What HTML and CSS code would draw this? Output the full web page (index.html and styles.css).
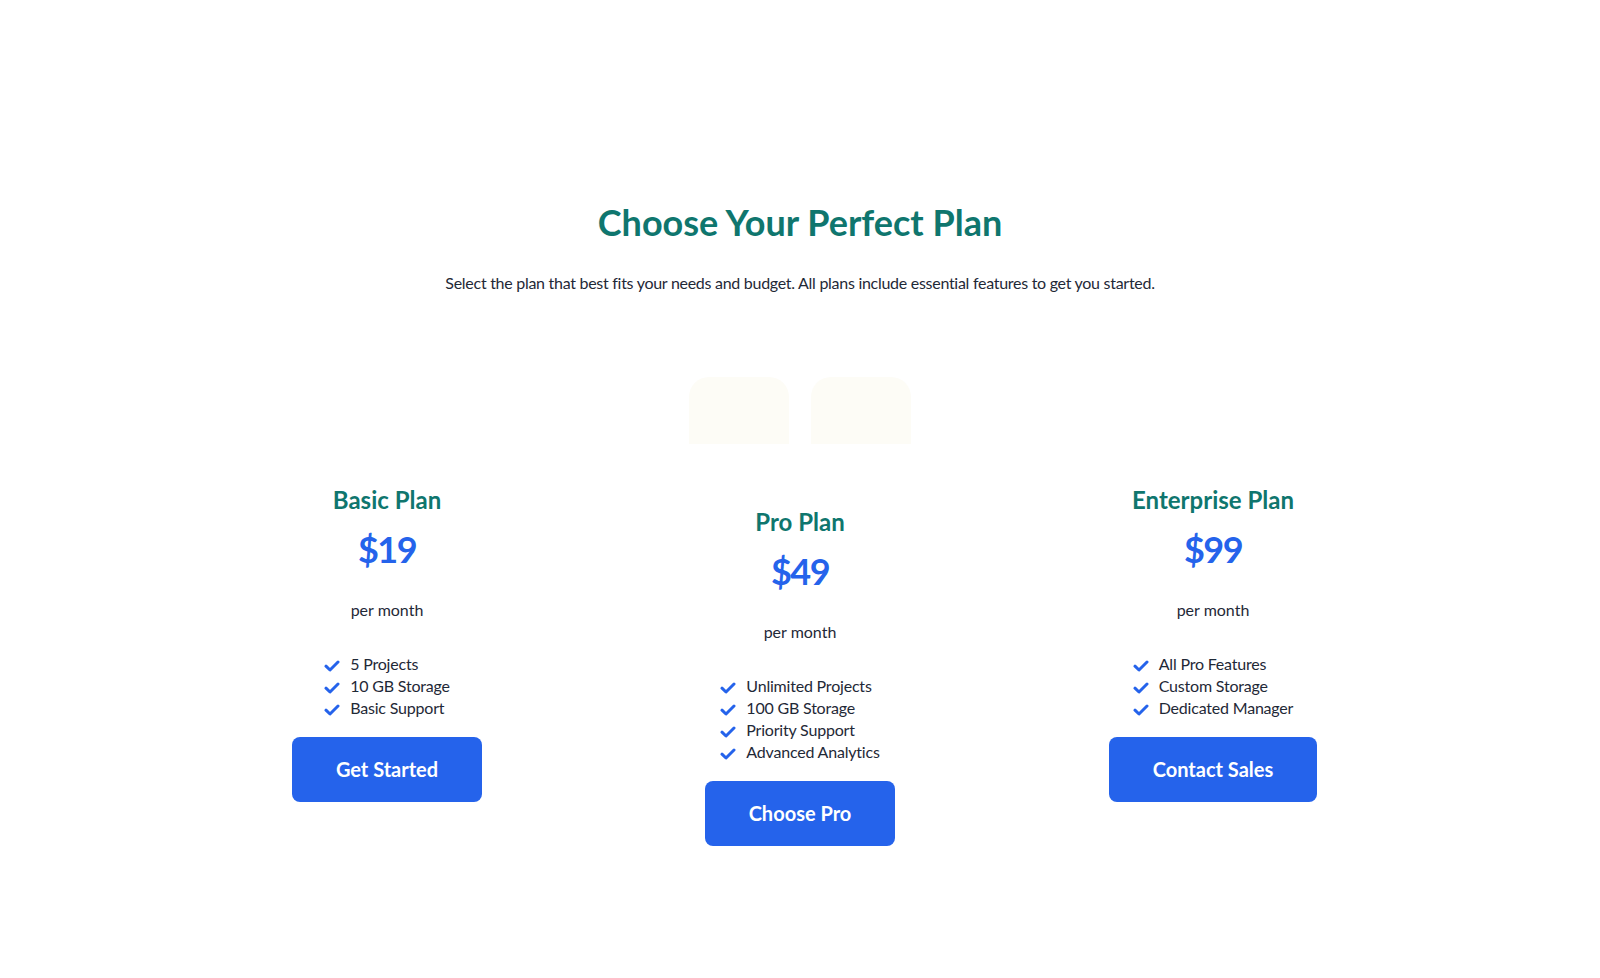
FILE: index.html
```html
<!DOCTYPE html>
<html lang="en">
<head>
<meta charset="utf-8">
<title>Choose Your Perfect Plan</title>
<link rel="stylesheet" href="styles.css">
</head>
<body>
<section class="pricing">
  <h1 class="title">Choose Your Perfect Plan</h1>
  <p class="subtitle">Select the plan that best fits your needs and budget. All plans include essential features to get you started.</p>
  <div class="decor"><span class="decor-tile"></span><span class="decor-tile"></span></div>
  <div class="plans">
    <div class="plan">
      <h2 class="plan-name">Basic Plan</h2>
      <div class="price">$19</div>
      <p class="period">per month</p>
      <ul class="features">
        <li><svg class="check" viewBox="0 0 16 12"><path d="M2 6.2 L6 10 L14 2"/></svg>5 Projects</li>
        <li><svg class="check" viewBox="0 0 16 12"><path d="M2 6.2 L6 10 L14 2"/></svg>10 GB Storage</li>
        <li><svg class="check" viewBox="0 0 16 12"><path d="M2 6.2 L6 10 L14 2"/></svg>Basic Support</li>
      </ul>
      <a class="btn" href="#">Get Started</a>
    </div>
    <div class="plan plan-featured">
      <h2 class="plan-name">Pro Plan</h2>
      <div class="price">$49</div>
      <p class="period">per month</p>
      <ul class="features">
        <li><svg class="check" viewBox="0 0 16 12"><path d="M2 6.2 L6 10 L14 2"/></svg>Unlimited Projects</li>
        <li><svg class="check" viewBox="0 0 16 12"><path d="M2 6.2 L6 10 L14 2"/></svg>100 GB Storage</li>
        <li><svg class="check" viewBox="0 0 16 12"><path d="M2 6.2 L6 10 L14 2"/></svg>Priority Support</li>
        <li><svg class="check" viewBox="0 0 16 12"><path d="M2 6.2 L6 10 L14 2"/></svg>Advanced Analytics</li>
      </ul>
      <a class="btn" href="#">Choose Pro</a>
    </div>
    <div class="plan">
      <h2 class="plan-name">Enterprise Plan</h2>
      <div class="price">$99</div>
      <p class="period">per month</p>
      <ul class="features">
        <li><svg class="check" viewBox="0 0 16 12"><path d="M2 6.2 L6 10 L14 2"/></svg>All Pro Features</li>
        <li><svg class="check" viewBox="0 0 16 12"><path d="M2 6.2 L6 10 L14 2"/></svg>Custom Storage</li>
        <li><svg class="check" viewBox="0 0 16 12"><path d="M2 6.2 L6 10 L14 2"/></svg>Dedicated Manager</li>
      </ul>
      <a class="btn" href="#">Contact Sales</a>
    </div>
  </div>
</section>
</body>
</html>
```
FILE: styles.css
```css
* { box-sizing: border-box; }
body {
  margin: 0;
  background: #ffffff;
  color: #1f2937;
  font-family: "Lato", "Noto Sans", sans-serif;
}
.pricing {
  display: flex;
  flex-direction: column;
  align-items: center;
  padding: 200px 0 120px;
}
.title {
  margin: 0;
  font-size: 36px;
  line-height: 44px;
  font-weight: 700;
  color: #0f766e;
}
.subtitle {
  margin: 27px 0 0;
  font-size: 16px;
  line-height: 24px;
  letter-spacing: -0.28px;
  color: #1f2937;
}
.decor {
  display: flex;
  gap: 22px;
  margin-top: 82px;
}
.decor-tile {
  width: 100px;
  height: 67px;
  border-radius: 20px 20px 0 0;
  background: #fdfcf6;
}
.plans {
  display: grid;
  grid-template-columns: repeat(3, 413px);
  align-items: start;
  margin-top: 40px;
}
.plan {
  display: flex;
  flex-direction: column;
  align-items: center;
}
.plan-featured {
  padding-top: 22px;
}
.plan-name {
  margin: 0;
  font-size: 24px;
  line-height: 32px;
  font-weight: 700;
  color: #0f766e;
}
.price {
  margin-top: 11px;
  font-size: 36px;
  line-height: 44px;
  font-weight: 700;
  letter-spacing: -1.5px;
  color: #2563eb;
}
.period {
  margin: 27px 0 0;
  font-size: 16px;
  line-height: 24px;
}
.features {
  list-style: none;
  margin: 31px 0 0;
  padding: 0;
}
.features li {
  display: flex;
  align-items: center;
  gap: 10px;
  font-size: 16px;
  line-height: 22px;
  letter-spacing: -0.2px;
}
.check {
  width: 16px;
  height: 12px;
  margin-top: 3px;
  fill: none;
  stroke: #2563eb;
  stroke-width: 3;
  stroke-linecap: round;
  stroke-linejoin: round;
}
.btn {
  display: inline-block;
  margin-top: 18px;
  padding: 18px 44px;
  font-size: 20px;
  line-height: 29px;
  font-weight: 700;
  color: #ffffff;
  background: #2563eb;
  border-radius: 8px;
  text-decoration: none;
}
```
